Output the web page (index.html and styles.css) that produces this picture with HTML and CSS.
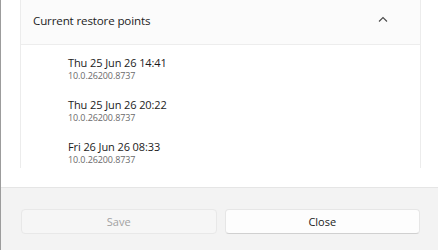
FILE: index.html
```html
<!DOCTYPE html>
<html>
<head>
<meta charset="utf-8">
<link rel="stylesheet" href="styles.css">
</head>
<body>
<div class="window">
  <div class="content">
    <div class="card">
      <div class="header">
        <span class="title">Current restore points</span>
        <svg class="chev" width="10" height="7" viewBox="0 0 10 7"><path d="M1 5.5 L5 1.5 L9 5.5" fill="none" stroke="#4a4a4a" stroke-width="1.1"/></svg>
      </div>
      <div class="list">
        <div class="item"><div class="date">Thu 25 Jun 26 14:41</div><div class="ver">10.0.26200.8737</div></div>
        <div class="item"><div class="date">Thu 25 Jun 26 20:22</div><div class="ver">10.0.26200.8737</div></div>
        <div class="item"><div class="date">Fri 26 Jun 26 08:33</div><div class="ver">10.0.26200.8737</div></div>
      </div>
    </div>
  </div>
  <div class="footer">
    <button class="btn disabled">Save</button>
    <button class="btn">Close</button>
  </div>
</div>
</body>
</html>
```
FILE: styles.css
```css
html, body { margin: 0; padding: 0; background: #fff; }
body { font-family: "Open Sans", "Noto Sans", sans-serif; color: #1b1b1b; }
.window {
  width: 438px; height: 250px; box-sizing: border-box;
  border-left: 1px solid #9c9c9c;
  display: flex; flex-direction: column; overflow: hidden;
}
.content { flex: 1; padding: 0 17px 0 19px; overflow: hidden; }
.card {
  height: 168px; box-sizing: border-box;
  border-left: 1px solid #ececec; border-right: 1px solid #ececec;
  display: flex; flex-direction: column;
}
.header {
  height: 45px; box-sizing: border-box; flex: none;
  background: #fbfbfb; border-bottom: 1px solid #ededed;
  display: flex; align-items: center; justify-content: space-between;
  padding: 0 32px 0 12px;
}
.title { font-size: 11.6px; letter-spacing: -0.15px; margin-top: -4px; }
.chev { margin-top: -6px; }
.list { padding: 10px 0 0 47px; display: flex; flex-direction: column; gap: 15px; }
.item { display: flex; flex-direction: column; }
.date { font-size: 11px; letter-spacing: -0.1px; line-height: 15px; }
.ver { font-size: 9px; letter-spacing: -0.1px; line-height: 13px; color: #6a6a6a; margin-top: -1px; }
.footer {
  height: 63px; flex: none; box-sizing: border-box;
  background: #f3f3f3; border-top: 1px solid #e5e5e5;
  padding: 21px 18px 0 20px;
  display: flex; gap: 8px; align-items: flex-start;
}
.btn {
  flex: 1; height: 25px; margin: 0;
  font-family: inherit; font-size: 11px; color: #1b1b1b;
  background: #fdfdfd; border: 1px solid #e6e6e6; border-bottom-color: #d0d0d0;
  border-radius: 4px;
}
.btn.disabled { color: #a2a2a2; background: #f6f6f6; border-color: #e8e8e8; }
```
